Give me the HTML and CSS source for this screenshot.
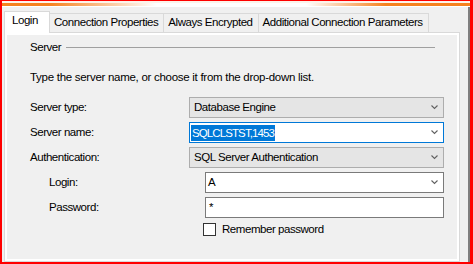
FILE: index.html
```html
<!DOCTYPE html>
<html lang="en">
  <head>
    <meta charset="UTF-8">
    <title>Connect to Server</title>
    <link rel="stylesheet" href="styles.css">
  </head>
  <body>
    <div class="frame">
      <div class="accent"></div>
      <div class="window">
        <div class="tabs">
          <div class="tab active">Login</div>
          <div class="tab">Connection Properties</div>
          <div class="tab">Always Encrypted</div>
          <div class="tab">Additional Connection Parameters</div>
        </div>
        <div class="panel">
          <div class="page">
            <div class="group-title">
              <span>Server</span>
              <span class="rule"></span>
            </div>
            <p class="hint">Type the server name, or choose it from the drop-down list.</p>

            <div class="row">
              <span class="label">Server type:</span>
              <div class="combo">
                <span>Database Engine</span>
                <svg class="chevron" width="8" height="5" viewBox="0 0 8 5"><polyline points="0.5,0.5 3.5,3.5 6.5,0.5"/></svg>
              </div>
            </div>
            <div class="row">
              <span class="label">Server name:</span>
              <div class="combo edit">
                <span class="selected">SQLCLSTST,1453</span>
                <svg class="chevron" width="8" height="5" viewBox="0 0 8 5"><polyline points="0.5,0.5 3.5,3.5 6.5,0.5"/></svg>
              </div>
            </div>
            <div class="row">
              <span class="label">Authentication:</span>
              <div class="combo">
                <span>SQL Server Authentication</span>
                <svg class="chevron" width="8" height="5" viewBox="0 0 8 5"><polyline points="0.5,0.5 3.5,3.5 6.5,0.5"/></svg>
              </div>
            </div>
            <div class="row sub">
              <span class="label">Login:</span>
              <div class="combo plain">
                <span>A</span>
                <svg class="chevron" width="8" height="5" viewBox="0 0 8 5"><polyline points="0.5,0.5 3.5,3.5 6.5,0.5"/></svg>
              </div>
            </div>
            <div class="row sub">
              <span class="label">Password:</span>
              <div class="textbox">*</div>
            </div>
            <div class="row check">
              <span class="checkbox"></span>
              <span>Remember password</span>
            </div>
          </div>
        </div>
      </div>
    </div>
  </body>
</html>
```

FILE: styles.css
```css
/* Connect to Server - aba Login */
body {
    margin: 0;
    background-color: #f0f0f0;
    font-family: "Liberation Sans", Arial, sans-serif;
    font-size: 11.5px;
    letter-spacing: -0.45px;
    color: #000;
    overflow: hidden;
}

.frame {
    width: 473px;
    height: 264px;
    box-sizing: border-box;
    border: solid #ff0000;
    border-width: 1px 3px 2px 2px;
    display: flex;
    flex-direction: column;
    overflow: hidden;
}

.accent {
    flex: none;
    height: 3px;
    border-top: 2px solid #fdf3ea;
    border-bottom: 1px solid #fff;
    background: linear-gradient(to right, #f5821f 0%, #f5821f 10%, #fff 33%, #fff 65%, #f5821f 82%, #f5821f 100%);
}

.window {
    flex: 1;
    display: flex;
    flex-direction: column;
    border-right: 2px solid #7f7f7f;
}

/* Abas */
.tabs {
    flex: none;
    height: 25px;
    padding-left: 2px;
    display: flex;
    align-items: flex-end;
}

.tab {
    height: 19px;
    box-sizing: border-box;
    padding: 1px 5px 0 4px;
    border: 1px solid #d9d9d9;
    border-left: none;
    border-bottom: none;
    line-height: 15px;
    white-space: nowrap;
}

.tab.active {
    width: 46px;
    height: 22px;
    padding-left: 7px;
    border-left: 1px solid #d9d9d9;
    background: #fff;
    margin-bottom: -1px;
    position: relative;
    z-index: 1;
}

.panel {
    flex: 1;
    display: flex;
    margin: 0 8px 0 2px;
    padding: 2px;
    border: 1px solid #d9d9d9;
    background: #fff;
}

.page {
    flex: 1;
    min-width: 0;
    background: #f0f0f0;
    padding: 5px 12px 0 23px;
}

.group-title {
    display: flex;
    align-items: center;
    gap: 5px;
    line-height: 15px;
}

.rule {
    flex: 1;
    height: 1px;
    margin-right: 10px;
    background: #a0a0a0;
}

.hint {
    margin: 15px 0 12px;
    line-height: 15px;
    letter-spacing: -0.28px;
}

/* Linhas do formulário */
.row {
    display: flex;
    align-items: center;
    height: 21px;
    margin-bottom: 4px;
    line-height: 15px;
}

.label {
    flex: none;
    width: 159px;
}

.row.sub {
    padding-left: 19px;
}

.row.sub .label {
    width: 156px;
}

.combo {
    width: 255px;
    height: 21px;
    box-sizing: border-box;
    display: flex;
    align-items: center;
    justify-content: space-between;
    padding: 0 4px 0 4px;
    border: 1px solid #adadad;
    background: #e5e5e5;
    line-height: 19px;
    white-space: nowrap;
}

.combo.edit {
    padding-left: 1px;
    border-color: #0078d7;
    background: #fff;
}

.selected {
    background: #0078d7;
    color: #fff;
    line-height: 16px;
    padding: 0 1px;
    letter-spacing: -0.9px;
}

.combo.plain {
    width: 239px;
    padding-left: 2px;
    border-color: #7a7a7a;
    background: #fff;
}

.chevron {
    flex: none;
    fill: none;
    stroke: #606060;
    stroke-width: 1.1;
}

.textbox {
    width: 239px;
    height: 21px;
    box-sizing: border-box;
    padding-left: 3px;
    border: 1px solid #7a7a7a;
    background: #fff;
    line-height: 19px;
}

.row.check {
    height: 15px;
    padding-left: 173px;
}

.checkbox {
    flex: none;
    width: 13px;
    height: 13px;
    box-sizing: border-box;
    margin-right: 6px;
    border: 1px solid #333;
    background: #fff;
}
```
